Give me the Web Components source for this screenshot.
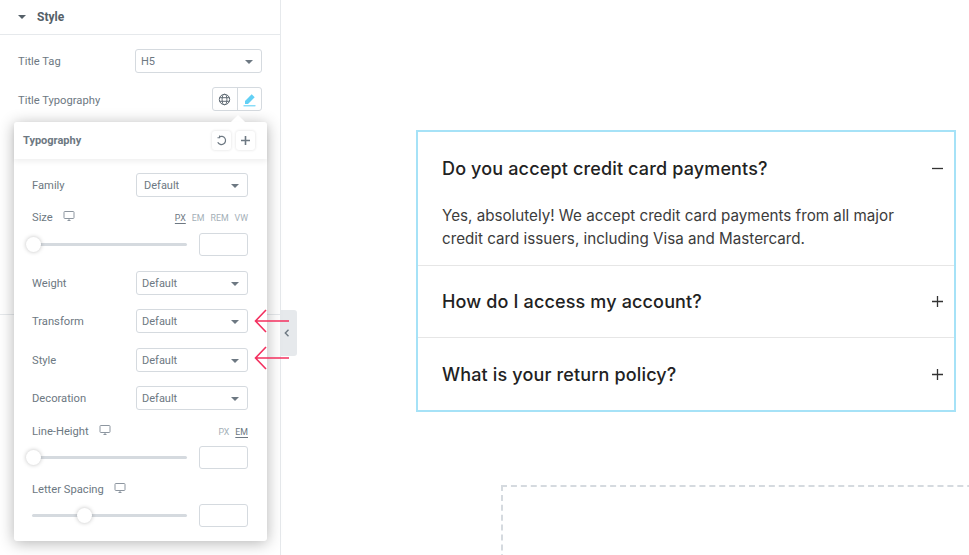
<!DOCTYPE html>
<html lang="en">
<head>
<meta charset="utf-8">
<title>Accordion typography</title>
<style>
  html, body { margin: 0; height: 100%; background: #fff; overflow: hidden; }
  body { font-family: Roboto, "Liberation Sans", sans-serif; }
</style>
</head>
<body>
<editor-page>
  <editor-panel slot="panel"></editor-panel>
  <faq-canvas slot="canvas">
    <faq-item open title-text="Do you accept credit card payments?">Yes, absolutely! We accept credit card payments from all major credit card issuers, including Visa and Mastercard.</faq-item>
    <faq-item title-text="How do I access my account?"></faq-item>
    <faq-item title-text="What is your return policy?" last></faq-item>
  </faq-canvas>
</editor-page>

<script>
const ICONS = {
  desktop: `<svg width="12" height="12" viewBox="0 0 12 12" fill="none" stroke="#8d96a0" stroke-width="1"><rect x="1" y="1.5" width="10" height="7" rx=".8"/><path d="M4.5 10.5h3M6 8.5v2"/></svg>`,
  globe: `<svg width="13" height="13" viewBox="0 0 13 13" fill="none" stroke="#5f6a73" stroke-width="1"><circle cx="6.5" cy="6.5" r="5.2"/><ellipse cx="6.5" cy="6.5" rx="2.4" ry="5.2"/><path d="M1.5 4.7h10M1.5 8.3h10"/></svg>`,
  pencil: `<svg width="15" height="15" viewBox="0 0 15 15"><path d="M3 9 9.7 2.2l3 3L6 12H3z" fill="#62d0f5"/><path d="M1.5 13.8h12" stroke="#62d0f5" stroke-width="1.1"/></svg>`,
  undo: `<svg width="11" height="11" viewBox="0 0 12 12" fill="none" stroke="#6d7882" stroke-width="1.3"><path d="M3.4 2.2A4.5 4.5 0 1 1 1.9 8"/><path d="M3.9 .6v2.3H1.6" stroke-width="1.1"/></svg>`,
  plus: `<svg width="9" height="9" viewBox="0 0 9 9" stroke="#6d7882" stroke-width="1.6"><path d="M0 4.5h9M4.5 0v9"/></svg>`
};

class BaseEl extends HTMLElement {
  connectedCallback() {
    if (this.shadowRoot) return;
    this.attachShadow({ mode: 'open' });
    this.shadowRoot.innerHTML = this.render();
  }
}

class EditorPage extends BaseEl {
  render() {
    return `
      <style>
        :host { display: grid; grid-template-columns: 281px 1fr; width: 969px; height: 555px; overflow: hidden; position: relative; }
      </style>
      <slot name="panel"></slot>
      <slot name="canvas"></slot>
    `;
  }
}

class UiSelect extends BaseEl {
  render() {
    const pad = this.getAttribute('pad') || '5';
    return `
      <style>
        :host { display: block; }
        .box {
          box-sizing: border-box; height: 100%; display: flex; align-items: center; justify-content: space-between;
          border: 1px solid #d5dadf; border-radius: 3px; background: #fff;
          padding: 1px 6px 0 ${pad}px; font-size: 11px; color: #6d7882;
        }
        i { width: 0; height: 0; border: 4.5px solid transparent; border-top: 4px solid #6d7882; border-bottom: 0; margin-right: 2px; }
      </style>
      <div class="box"><span><slot></slot></span><i></i></div>
    `;
  }
}

class SelectRow extends BaseEl {
  render() {
    const pad = this.getAttribute('pad') || '5';
    return `
      <style>
        :host { display: flex; align-items: center; justify-content: space-between; height: 24px; font-size: 11.2px; color: #6d7882; }
        span { padding-top: 1px; }
        ui-select { width: 112px; height: 24px; }
      </style>
      <span>${this.getAttribute('label')}</span>
      <ui-select pad="${pad}">${this.getAttribute('value')}</ui-select>
    `;
  }
}

class UnitRow extends BaseEl {
  render() {
    const units = (this.getAttribute('units') || '').split(' ').filter(Boolean);
    const active = this.getAttribute('active');
    return `
      <style>
        :host { display: flex; align-items: center; height: 14px; font-size: 11.2px; color: #6d7882; }
        .icon { display: flex; margin-left: 10px; margin-top: -2px; }
        .units { margin-left: auto; margin-top: 2px; display: flex; gap: 6px; font-size: 8.8px; color: #a4afb7; }
        .on { color: #6d7882; text-decoration: underline; text-underline-offset: 2px; }
      </style>
      <span>${this.getAttribute('label')}</span>
      <span class="icon">${ICONS.desktop}</span>
      <span class="units">${units.map(u => `<span class="${u === active ? 'on' : ''}">${u}</span>`).join('')}</span>
    `;
  }
}

class UiSlider extends BaseEl {
  render() {
    const at = this.getAttribute('at') || '1';
    return `
      <style>
        :host { display: flex; align-items: center; justify-content: space-between; height: 23px; }
        .track { position: relative; width: 155px; height: 3px; border-radius: 2px; background: #d5dadf; }
        .thumb {
          position: absolute; top: 50%; left: ${at}px; width: 15px; height: 15px; margin: -7.5px 0 0 -7.5px;
          border-radius: 50%; background: #fff; box-shadow: 0 0 4px rgba(0,0,0,.25);
        }
        .num { box-sizing: border-box; width: 49px; height: 23px; border: 1px solid #d5dadf; border-radius: 3px; background: #fff; }
      </style>
      <div class="track"><div class="thumb"></div></div>
      <div class="num"></div>
    `;
  }
}

class TypoPopover extends BaseEl {
  render() {
    return `
      <style>
        :host {
          /* floats over the panel, opened from the pencil button */
          position: absolute; left: 14px; top: 122px; width: 253px; box-sizing: border-box;
          background: #fff; border-radius: 3px; box-shadow: 0 2px 15px rgba(0,0,0,.3); z-index: 2;
        }
        :host::before {
          content: ""; position: absolute; top: -5px; left: 219px; width: 10px; height: 10px;
          background: #fff; transform: rotate(45deg);
        }
        header {
          position: relative; height: 37px; display: flex; align-items: center; padding: 0 12px 0 9px;
          font-size: 11px; color: #6d7882; box-shadow: 0 3px 5px rgba(0,0,0,.06);
        }
        header b { margin-right: auto; font-weight: 700; }
        .tool {
          width: 19px; height: 19px; margin-left: 5px; display: flex; align-items: center; justify-content: center;
          border-radius: 3px; background: #fff; box-shadow: 0 0 3px rgba(0,0,0,.14);
        }
        .body { display: block; padding: 14px 19px 14px 18px; }
        .body > * { margin-top: var(--mt, 14px); }
        .body > :first-child { margin-top: 0; }
      </style>
      <header><b>Typography</b><span class="tool">${ICONS.undo}</span><span class="tool">${ICONS.plus}</span></header>
      <div class="body">
        <select-row label="Family" value="Default" pad="7"></select-row>
        <unit-row style="--mt:13px" label="Size" units="PX EM REM VW" active="PX"></unit-row>
        <ui-slider style="--mt:9px" at="1"></ui-slider>
        <select-row style="--mt:15px" label="Weight" value="Default"></select-row>
        <select-row label="Transform" value="Default"></select-row>
        <select-row style="--mt:15px" label="Style" value="Default"></select-row>
        <select-row label="Decoration" value="Default"></select-row>
        <unit-row label="Line-Height" units="PX EM" active="EM"></unit-row>
        <ui-slider style="--mt:8px" at="1"></ui-slider>
        <unit-row style="--mt:13px" label="Letter Spacing"></unit-row>
        <ui-slider style="--mt:8px" at="52"></ui-slider>
      </div>
    `;
  }
}

class EditorPanel extends BaseEl {
  render() {
    return `
      <style>
        :host { display: block; position: relative; height: 555px; box-sizing: border-box; border-right: 1px solid #e6e9ec; background: #fff; font-size: 11.2px; color: #6d7882; }
        .head { height: 35px; box-sizing: border-box; display: flex; align-items: center; padding-left: 18px; border-bottom: 1px solid #e6e9ec; font-size: 12px; font-weight: 700; color: #556068; }
        .head i { width: 0; height: 0; border: 4px solid transparent; border-top: 4px solid #556068; border-bottom: 0; margin-right: 11px; }
        .rows { padding: 14px 18px 0; }
        .row { display: flex; align-items: center; justify-content: space-between; height: 24px; margin-bottom: 14px; }
        .row > span { padding-top: 1px; }
        .row > span.low { padding-top: 2px; }
        ui-select { width: 127px; height: 24px; }
        .pair { display: flex; width: 50px; height: 24px; box-sizing: border-box; border: 1px solid #d5dadf; border-radius: 3px; }
        .pair span { flex: 1; display: flex; align-items: center; justify-content: center; }
        .pair span + span { border-left: 1px solid #d5dadf; }
        hr { margin: 203px 0 0; border: 0; border-top: 1px solid #e6e9ec; }
        .toggle { position: absolute; left: 281px; top: 310px; width: 16px; height: 46px; box-sizing: border-box; padding-right: 4px; background: #e6e9ec; display: flex; align-items: center; justify-content: center; border-radius: 0 3px 3px 0; z-index: 1; }
        .arrows { position: absolute; left: 254px; top: 309px; z-index: 3; display: block; }
      </style>
      <div class="head"><i></i>Style</div>
      <div class="rows">
        <div class="row"><span>Title Tag</span><ui-select>H5</ui-select></div>
        <div class="row"><span class="low">Title Typography</span><div class="pair"><span>${ICONS.globe}</span><span>${ICONS.pencil}</span></div></div>
      </div>
      <hr>
      <typo-popover></typo-popover>
      <div class="toggle"><svg width="6" height="8" viewBox="0 0 6 8" fill="none" stroke="#6d7882" stroke-width="1.4"><path d="M4.5 .8 1.3 4l3.2 3.2"/></svg></div>
      <svg class="arrows" width="37" height="63" viewBox="0 0 37 63" fill="none" stroke="#f3305f" stroke-width="1.6">
        <path d="M35 12H2M12 1 1.5 12 12 23M35 49H2M12 38 1.5 49 12 60"/>
      </svg>
    `;
  }
}

class FaqCanvas extends BaseEl {
  render() {
    return `
      <style>
        :host { display: block; position: relative; height: 555px; padding: 130px 0 0 135px; box-sizing: border-box; }
        .acc { width: 540px; box-sizing: border-box; border: 2px solid #a6e2f7; }
        .drop { width: 500px; height: 200px; margin: 73px 0 0 85px; border: 2px dashed #d5dadf; border-right: 0; }
      </style>
      <div class="acc"><slot></slot></div>
      <div class="drop"></div>
    `;
  }
}

class FaqItem extends BaseEl {
  render() {
    const open = this.hasAttribute('open');
    const icon = open
      ? '<path d="M0 5.5h11"/>'
      : '<path d="M0 5.5h11M5.5 0v11"/>';
    return `
      <style>
        :host { display: block; font-family: Inter, "Open Sans", sans-serif; ${this.hasAttribute('last') ? '' : 'border-bottom: 1px solid #e6e6e6;'} }
        .title { display: flex; align-items: center; justify-content: space-between; height: 71px; padding: 0 11px 0 24px; font-size: 18px; letter-spacing: .15px; font-weight: 500; color: #222; }
        ${open ? '.title { height: 72px; }' : ''}
        ${this.hasAttribute('last') ? '.title { height: 72px; }' : ''}
        .text { width: 480px; padding: 0 0 15px 24px; font-size: 15.2px; line-height: 23px; color: #3c3c3c; }
        svg { display: block; }
      </style>
      <div class="title"><span>${this.getAttribute('title-text')}</span>
        <svg width="11" height="11" viewBox="0 0 11 11" fill="none" stroke="#333" stroke-width="1.3">${icon}</svg></div>
      ${open ? '<div class="text"><slot></slot></div>' : ''}
    `;
  }
}

customElements.define('ui-select', UiSelect);
customElements.define('select-row', SelectRow);
customElements.define('unit-row', UnitRow);
customElements.define('ui-slider', UiSlider);
customElements.define('typo-popover', TypoPopover);
customElements.define('editor-panel', EditorPanel);
customElements.define('faq-item', FaqItem);
customElements.define('faq-canvas', FaqCanvas);
customElements.define('editor-page', EditorPage);
</script>
</body>
</html>
